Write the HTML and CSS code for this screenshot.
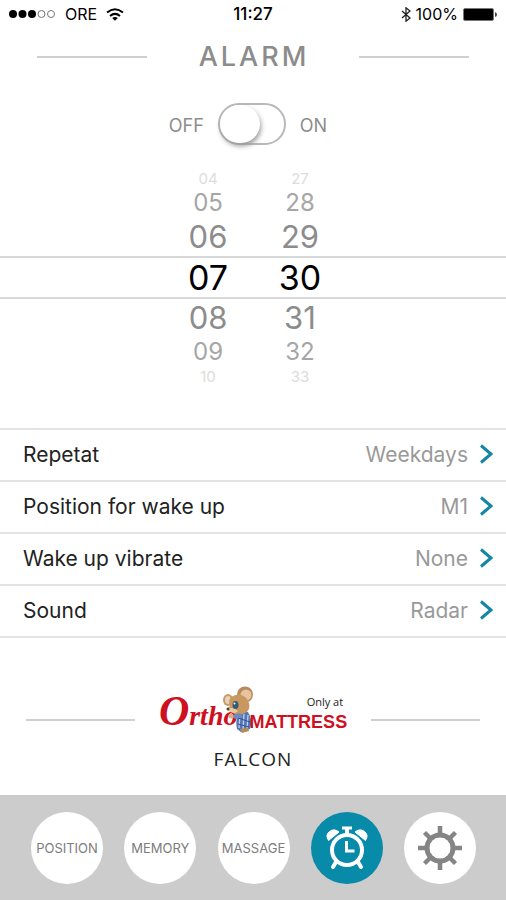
FILE: index.html
```html
<!DOCTYPE html>
<html lang="en">
<head>
<meta charset="utf-8">
<meta name="viewport" content="width=device-width, initial-scale=1">
<title>Alarm</title>
<link rel="stylesheet" href="styles.css">
</head>
<body>
<div class="status">
  <div class="carrier">
    <svg class="signal" viewBox="0 0 47 8" aria-hidden="true">
      <circle cx="4" cy="4" r="4"/><circle cx="13.5" cy="4" r="4"/><circle cx="23" cy="4" r="4"/>
      <g fill="none" stroke="#777"><circle cx="32.5" cy="4" r="3.5"/><circle cx="42" cy="4" r="3.5"/></g>
    </svg>
    <span>ORE</span>
    <svg class="wifi" viewBox="0 0 18 13" aria-hidden="true">
      <g fill="none" stroke="#000" stroke-width="2"><path d="M1 4.6Q9-2 17 4.6"/><path d="M4 8Q9 3.8 14 8"/></g>
      <path d="M6.2 10Q9 7.8 11.8 10L9 12.8Z"/>
    </svg>
  </div>
  <time>11:27</time>
  <div class="power">
    <svg class="bluetooth" viewBox="0 0 10 15" aria-hidden="true"><path d="M1 4 9 11 5 14.2V.8L9 4 1 11" fill="none" stroke="#222" stroke-width="1.3"/></svg>
    <span>100%</span>
    <svg class="battery" viewBox="0 0 34 13" aria-hidden="true"><rect x=".5" y=".5" width="30" height="12" rx="1.5" fill="#000" stroke="#777"/><path d="M32 4q2 .5 2 2.500t-2 2.500z" fill="#444"/></svg>
  </div>
</div>

<main>
  <header class="ruled title"><h1>ALARM</h1></header>

  <label class="toggle">
    <span>OFF</span>
    <input type="checkbox" role="switch" aria-label="Alarm">
    <span>ON</span>
  </label>

  <div class="wheel">
    <div class="tick top-far"><button>04</button><button>27</button></div>
    <div class="tick top-mid"><button>05</button><button>28</button></div>
    <div class="tick top-near"><button>06</button><button>29</button></div>
    <div class="tick current"><button>07</button><button>30</button></div>
    <div class="tick low-near"><button>08</button><button>31</button></div>
    <div class="tick low-mid"><button>09</button><button>32</button></div>
    <div class="tick low-far"><button>10</button><button>33</button></div>
  </div>

  <nav class="settings" aria-label="Alarm settings">
    <a href="#repeat"><span>Repetat</span><span class="value">Weekdays</span><svg viewBox="0 0 13 20" aria-hidden="true"><path d="M1 1.500 11 10 1 18.500"/></svg></a>
    <a href="#position"><span>Position for wake up</span><span class="value">M1</span><svg viewBox="0 0 13 20" aria-hidden="true"><path d="M1 1.500 11 10 1 18.500"/></svg></a>
    <a href="#vibrate"><span>Wake up vibrate</span><span class="value">None</span><svg viewBox="0 0 13 20" aria-hidden="true"><path d="M1 1.500 11 10 1 18.500"/></svg></a>
    <a href="#sound"><span>Sound</span><span class="value">Radar</span><svg viewBox="0 0 13 20" aria-hidden="true"><path d="M1 1.500 11 10 1 18.500"/></svg></a>
  </nav>

  <section class="brand">
    <div class="ruled">
      <div class="logo">
        <span class="script"><span class="initial">O</span>rtho</span>
        <svg class="mouse" viewBox="0 0 34 48" aria-hidden="true">
          <path d="M16 26Q12 35 14 43L18 46 27 43Q30 34 25 26Z" fill="#5577b5"/>
          <path d="M17 28 16 42M21 28 20 44M25 29 24 43" stroke="#c3d0eb" stroke-width="1.300"/>
          <path d="M15 32 27 36M15 38 26 41" stroke="#304f98"/>
          <path d="M17 43 25 42 26 45 19 47Z" fill="#b78955"/>
          <ellipse cx="22" cy="8.500" rx="8" ry="8" fill="#b98a5c"/>
          <ellipse cx="23" cy="9" rx="5.500" ry="5.500" fill="#e8c3a0"/>
          <ellipse cx="5" cy="14" rx="5" ry="6" fill="#c49a70"/>
          <ellipse cx="5" cy="14" rx="3" ry="4" fill="#ecd0b2"/>
          <path d="M8 11Q17 5 24 13 29 21 24 26 15 31 8 26 2 23 7 20 5 15 8 11Z" fill="#c99760"/>
          <path d="M5 22Q10 21 15 25 12 29 6 25Z" fill="#e9c99f"/>
          <ellipse cx="12.500" cy="19" rx="3" ry="4" fill="#315b79"/><circle cx="11.500" cy="17.500" r="1" fill="#fff"/>
          <circle cx="5" cy="23" r="1.500" fill="#5c3b29"/>
          <path d="M17 27Q10 28 8 31L13 33 20 31Z" fill="#6d8bc3"/>
          <circle cx="8" cy="30" r="2.500" fill="#d9ae7d"/>
        </svg>
        <span class="stack"><small>Only at</small><span class="block">MATTRESS</span></span>
      </div>
    </div>
    <p>FALCON</p>
  </section>
</main>

<footer>
  <nav class="tabs" aria-label="Main">
    <a href="#position-tab">POSITION</a>
    <a href="#memory-tab">MEMORY</a>
    <a href="#massage-tab">MASSAGE</a>
    <a href="#alarm" class="active" aria-label="Alarm" aria-current="page">
      <svg viewBox="0 0 44 44" fill="none" stroke="#fff" aria-hidden="true">
        <circle cx="22" cy="24" r="15" stroke-width="4"/>
        <path d="M21.500 15V25H29.500" stroke-width="3"/>
        <path d="M17 2H27" stroke-width="3"/><path d="M22 2V9" stroke-width="4"/>
        <path d="M11 36 8 41M33 36 36 41" stroke-width="4" stroke-linecap="round"/>
        <path d="M3.500 14.500Q0 9 4.500 5.500T14 6ZM40.500 14.500Q44 9 39.500 5.500T30 6Z" fill="#fff" stroke-width="1"/>
      </svg>
    </a>
    <a href="#settings" aria-label="Settings">
      <svg viewBox="0 0 44 44" aria-hidden="true">
        <path d="M22 0V44M0 22H44M6.500 6.500 37.500 37.500M37.500 6.500 6.500 37.500" stroke="#858585" stroke-width="4.500"/>
        <circle cx="22" cy="22" r="13" fill="none" stroke="#858585" stroke-width="5"/>
        <circle cx="22" cy="22" r="10.500" fill="#fff"/>
      </svg>
    </a>
  </nav>
</footer>
</body>
</html>
```
FILE: styles.css
```css
* { box-sizing: border-box; }

body {
  margin: 0;
  min-height: 100vh;
  display: flex;
  flex-direction: column;
  background: #fff;
  color: #222;
  font-family: Inter, "Liberation Sans", sans-serif;
}

svg { display: block; flex: none; }
a { color: inherit; text-decoration: none; }

.status {
  display: grid;
  grid-template-columns: 1fr auto 1fr;
  align-items: center;
  height: 28px;
  padding: 0 9px;
  font-size: 16px;
  color: #000;
}
.status time { font-size: 17px; font-weight: 500; }
.carrier, .power { display: flex; align-items: center; }
.carrier { gap: 9px; }
.power { gap: 5px; justify-content: flex-end; }
.signal { width: 47px; height: 8px; }
.wifi { width: 18px; height: 13px; }
.bluetooth { width: 10px; height: 15px; }
.battery { width: 34px; height: 13px; }

main { flex: 1; }

.ruled { display: flex; align-items: center; }
.ruled::before, .ruled::after {
  content: "";
  flex: 1;
  height: 2px;
  background: #d0d0d0;
}
.title { height: 58px; padding: 0 37px; }
h1 {
  margin: 0 50px 0 52px;
  font-size: 27px;
  line-height: 32px;
  font-weight: 500;
  letter-spacing: 3px;
  color: #8c8c8c;
}

.toggle {
  display: flex;
  width: fit-content;
  margin: 17px auto 24px;
  align-items: center;
  justify-content: center;
  gap: 14px;
  padding-right: 10px;
  font-size: 18px;
  color: #8c8c8c;
}
.toggle span { padding-top: 2px; }
.toggle input {
  appearance: none;
  width: 68px;
  height: 42px;
  margin: 0;
  border: 2px solid #b8b8b8;
  border-radius: 21px;
}
.toggle input::before {
  content: "";
  display: block;
  width: 40px;
  height: 38px;
  border-radius: 20px;
  background: #fff;
  box-shadow: 1px 3px 5px #999;
}
.toggle input:checked::before { margin-left: auto; }

.wheel { margin-bottom: 42px; }
.tick { display: flex; justify-content: center; gap: 32px; padding-left: 2px; }
.tick button {
  width: 60px;
  padding: 0;
  border: 0;
  background: none;
  color: inherit;
  font: inherit;
}
.current {
  height: 43px;
  border: solid #d8d8d8;
  border-width: 2px 0;
  font-size: 34px;
  line-height: 38px;
  color: #000;
}
.top-near, .low-near { height: 38px; font-size: 31px; line-height: 38px; color: #8c8c8c; }
.top-mid, .low-mid { height: 30px; font-size: 24px; line-height: 30px; color: #a6a6a6; }
.top-far, .low-far { height: 19px; font-size: 15px; line-height: 19px; color: #dcdcdc; }

.settings { border-top: 2px solid #e3e3e3; font-size: 21px; }
.settings a {
  display: flex;
  align-items: center;
  min-height: 52px;
  padding: 0 13px 2px 23px;
  border-bottom: 2px solid #e3e3e3;
}
.value { margin-left: auto; color: #999; }
.settings svg {
  width: 13px;
  height: 20px;
  margin-left: 12px;
  fill: none;
  stroke: #1286a3;
  stroke-width: 3;
}

.brand { padding: 48px 26px 16px; text-align: center; }
.logo {
  display: flex;
  align-items: flex-end;
  height: 48px;
  margin: 0 24px;
  color: #cf1020;
}
.brand .ruled::before, .brand .ruled::after { margin-top: 20px; }
.script { font: italic bold 28px/36px "Liberation Serif", serif; }
.initial { font-size: 42px; }
.mouse { width: 34px; height: 48px; margin: 0 -8px 0 -14px; }
.stack { display: flex; flex-direction: column; align-items: flex-end; }
small { padding-right: 4px; font: 11px/16px "Open Sans", sans-serif; color: #222; }
.block { font: bold 18px/24px "Liberation Sans", sans-serif; }
.brand p {
  margin: 12px 0 0;
  font: 19px/26px "Open Sans", sans-serif;
  letter-spacing: 1px;
}

footer { background: #ccc; padding: 17px 30px 16px 31px; }
.tabs { display: flex; justify-content: space-between; }
.tabs a {
  display: grid;
  place-items: center;
  width: 72px;
  height: 72px;
  border-radius: 50%;
  background: #fff;
  color: #7c7c7c;
  font-size: 13px;
}
.tabs .active { background: #078ba8; }
.tabs svg { width: 44px; height: 44px; }
```
